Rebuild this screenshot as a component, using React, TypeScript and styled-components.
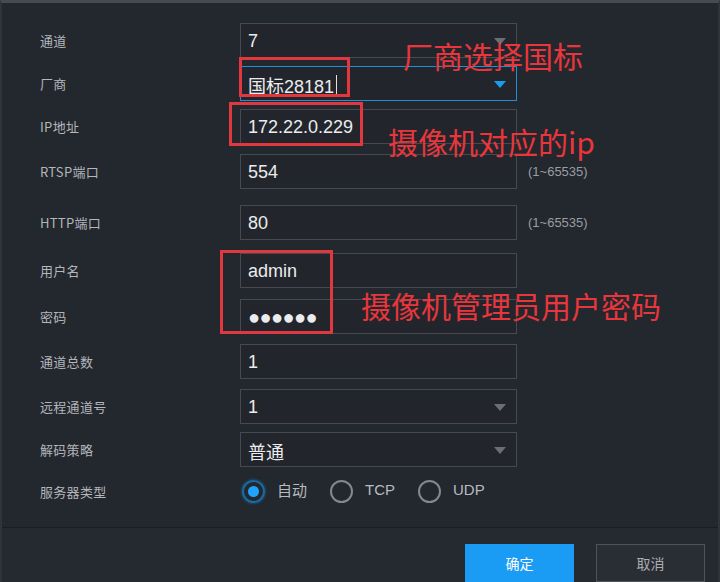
import * as React from 'react';
import styled, { createGlobalStyle } from 'styled-components';

const GlobalStyle = createGlobalStyle`
  html, body {
    margin: 0;
    padding: 0;
    background: #23272e;
  }
  body {
    font-family: "Liberation Sans", "Noto Sans CJK SC", sans-serif;
  }
`;

type Field = {
  label: string;
  value?: string;
  kind: 'input' | 'select' | 'password';
  hint?: string;
  focus?: boolean;
  caret?: boolean;
  gap: number;
};

const fields: Field[] = [
  { label: '通道', value: '7', kind: 'select', gap: 0 },
  { label: '厂商', value: '国标28181', kind: 'select', focus: true, caret: true, gap: 8 },
  { label: 'IP地址', value: '172.22.0.229', kind: 'input', gap: 8 },
  { label: 'RTSP端口', value: '554', kind: 'input', hint: '(1~65535)', gap: 10 },
  { label: 'HTTP端口', value: '80', kind: 'input', hint: '(1~65535)', gap: 16 },
  { label: '用户名', value: 'admin', kind: 'input', gap: 13 },
  { label: '密码', value: '●●●●●●', kind: 'password', gap: 11 },
  { label: '通道总数', value: '1', kind: 'input', gap: 10 },
  { label: '远程通道号', value: '1', kind: 'select', gap: 10 },
  { label: '解码策略', value: '普通', kind: 'select', gap: 8 },
];

const protocols = ['自动', 'TCP', 'UDP'];

export default function App() {
  const [proto, setProto] = React.useState('自动');

  return (
    <>
      <GlobalStyle />
      <Frame>
        <Form>
          {fields.map(f => (
            <Row key={f.label} $gap={f.gap}>
              <Label>{f.label}</Label>
              <Box $focus={f.focus}>
                <Value $password={f.kind === 'password'}>
                  {f.value}
                  {f.caret && <Caret />}
                </Value>
                {f.kind === 'select' && <Arrow $focus={f.focus} />}
              </Box>
              {f.hint && <Hint>{f.hint}</Hint>}
            </Row>
          ))}
          <RadioRow>
            <Label>服务器类型</Label>
            <RadioGroup>
              {protocols.map(p => (
                <RadioItem key={p} onClick={() => setProto(p)}>
                  <RadioDot $on={proto === p} />
                  <RadioText>{p}</RadioText>
                </RadioItem>
              ))}
            </RadioGroup>
          </RadioRow>
        </Form>
        <Footer>
          <PrimaryButton>确定</PrimaryButton>
          <GhostButton>取消</GhostButton>
        </Footer>

        <Mark $x={239} $y={57} $w={111} $h={40} />
        <Mark $x={229} $y={102} $w={134} $h={44} />
        <Mark $x={220} $y={250} $w={113} $h={84} />
        <Note $x={403} $y={38}>厂商选择国标</Note>
        <Note $x={388} $y={124}>摄像机对应的ip</Note>
        <Note $x={361} $y={288}>摄像机管理员用户密码</Note>
      </Frame>
    </>
  );
}

const Frame = styled.div`
  position: relative;
  width: 720px;
  height: 582px;
  box-sizing: border-box;
  overflow: hidden;
  background: #23272e;
  border-top: 3px solid #474a4f;
  border-left: 2px solid #2f333a;
  border-right: 2px solid #30343a;
  display: flex;
  flex-direction: column;
`;

const Form = styled.div`
  height: 530px;
  box-sizing: border-box;
  padding: 20px 0 0 38px;
  border-bottom: 1px solid #1a1d22;
  display: flex;
  flex-direction: column;
`;

const Row = styled.div<{ $gap: number }>`
  display: flex;
  align-items: center;
  height: 35px;
  margin-top: ${p => p.$gap}px;
`;

const Label = styled.div`
  width: 200px;
  flex: none;
  font-family: "Noto Sans CJK SC", "Liberation Sans", sans-serif;
  font-size: 13px;
  color: #b3b6bb;
  letter-spacing: 0.3px;
`;

const Box = styled.div<{ $focus?: boolean }>`
  position: relative;
  width: 277px;
  height: 35px;
  box-sizing: border-box;
  border: 1px solid ${p => (p.$focus ? '#1f8fd6' : '#464a50')};
  background: #22262c;
  display: flex;
  align-items: center;
  padding: 2px 0 0 7px;
`;

const Value = styled.span<{ $password?: boolean }>`
  font-family: "Liberation Sans", "Noto Sans CJK SC", sans-serif;
  font-size: ${p => (p.$password ? '20px' : '18px')};
  letter-spacing: ${p => (p.$password ? '-0.6px' : '0')};
  color: #ebecee;
  display: flex;
  align-items: center;
`;

const Caret = styled.span`
  display: inline-block;
  width: 1px;
  height: 20px;
  margin-left: 2px;
  background: #e0e0e0;
`;

const Arrow = styled.span<{ $focus?: boolean }>`
  position: absolute;
  right: 10px;
  top: 50%;
  margin-top: -3px;
  width: 0;
  height: 0;
  border-left: 6px solid transparent;
  border-right: 6px solid transparent;
  border-top: 7px solid ${p => (p.$focus ? '#1a9df0' : '#6b6e73')};
`;

const Hint = styled.span`
  margin-left: 11px;
  font-size: 13px;
  color: #9a9da2;
`;

const RadioRow = styled.div`
  display: flex;
  align-items: center;
  height: 24px;
  margin-top: 12px;
`;

const RadioGroup = styled.div`
  display: flex;
  align-items: center;
  gap: 23px;
  margin-left: 2px;
`;

const RadioItem = styled.label`
  display: flex;
  align-items: center;
  gap: 12px;
  cursor: pointer;
`;

const RadioDot = styled.span<{ $on: boolean }>`
  width: 23px;
  height: 23px;
  box-sizing: border-box;
  border-radius: 50%;
  border: 2px solid ${p => (p.$on ? '#1c6aa0' : '#85888d')};
  box-shadow: ${p => (p.$on ? '0 0 3px #1a6fa8' : 'none')};
  display: flex;
  align-items: center;
  justify-content: center;
  &::after {
    content: '';
    width: 11px;
    height: 11px;
    border-radius: 50%;
    background: #1ea4ff;
    display: ${p => (p.$on ? 'block' : 'none')};
  }
`;

const RadioText = styled.span`
  font-family: "Liberation Sans", "Noto Sans CJK SC", sans-serif;
  font-size: 15px;
  color: #b8bbc0;
  margin-top: -3px;
`;

const Footer = styled.div`
  flex: 1;
  display: flex;
  justify-content: flex-end;
  align-items: flex-start;
  gap: 22px;
  padding: 16px 13px 0 0;
  background: #252930;
`;

const BaseButton = styled.button`
  width: 109px;
  height: 38px;
  flex: none;
  font-family: "Noto Sans CJK SC", "Liberation Sans", sans-serif;
  font-size: 14px;
  cursor: pointer;
`;

const PrimaryButton = styled(BaseButton)`
  border: none;
  background: #1a9cf4;
  color: #ffffff;
`;

const GhostButton = styled(BaseButton)`
  border: 1px solid #50545a;
  background: #292d34;
  color: #a9acb1;
`;

const Mark = styled.div<{ $x: number; $y: number; $w: number; $h: number }>`
  position: absolute;
  left: ${p => p.$x - 2}px;
  top: ${p => p.$y - 3}px;
  width: ${p => p.$w}px;
  height: ${p => p.$h}px;
  box-sizing: border-box;
  border: 3px solid #e0383e;
  pointer-events: none;
`;

const Note = styled.div<{ $x: number; $y: number }>`
  position: absolute;
  left: ${p => p.$x - 2}px;
  top: ${p => p.$y - 3}px;
  font-family: "Noto Sans CJK SC", sans-serif;
  font-size: 30px;
  line-height: 34px;
  color: #e8363c;
  white-space: nowrap;
  pointer-events: none;
`;
